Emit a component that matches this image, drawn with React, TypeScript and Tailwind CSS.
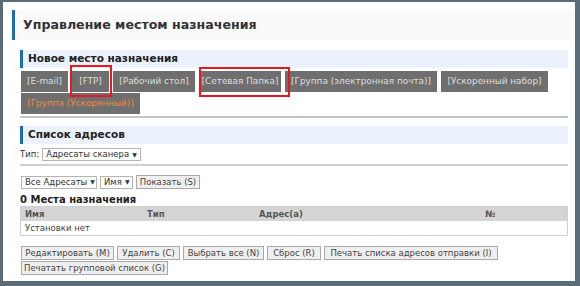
import React from 'react';

const tabs: { label: string; w: string }[] = [
  { label: '[E-mail]', w: 'w-[47px]' },
  { label: '[FTP]', w: 'w-[37px]' },
  { label: '[Рабочий стол]', w: 'w-[82px]' },
  { label: '[Сетевая Папка]', w: 'w-[82px]' },
  { label: '[Группа (электронная почта)]', w: 'w-[152px]' },
  { label: '[Ускоренный набор]', w: 'w-[107px]' },
];

const SectionBar: React.FC<{ title: string }> = ({ title }) => (
  <div className="h-[18px] flex items-center border-l-[3px] border-[#1f6db0] bg-[#ebf2fd] pl-[5px]">
    <span className="text-[10.5px] font-bold text-[#222]">{title}</span>
  </div>
);

const Btn: React.FC<{ children: React.ReactNode; w: string }> = ({ children, w }) => (
  <button
    className={`h-[14px] ${w} flex items-center justify-center border border-[#a9a9a9] bg-[#efefef] text-[8.5px] text-[#444] leading-none whitespace-nowrap`}
  >
    {children}
  </button>
);

const Select: React.FC<{ label: string; w: string }> = ({ label, w }) => (
  <div
    className={`h-[13px] ${w} flex items-center gap-[3px] border border-[#b5b5b5] bg-white px-[3px] text-[8.5px] text-[#333] leading-none whitespace-nowrap`}
  >
    <span>{label}</span>
    <span className="text-[6px]">▼</span>
  </div>
);

const App: React.FC = () => {
  return (
    <div
      className="w-[580px] h-[286px] bg-[#5b6b77] pt-[2px] pl-[3px] pr-[5px] pb-[5px] overflow-hidden"
      style={{ fontFamily: '"DejaVu Sans", Verdana, sans-serif' }}
    >
      <div className="relative h-full bg-white pt-[8px] pl-[9px] pr-[1px]">
        {/* page header */}
        <div className="h-[30px] flex items-center border-l-[3px] border-[#1f6db0] bg-[#fafafa] pl-[8px]">
          <h1 className="text-[12.6px] font-bold text-[#333]">Управление местом назначения</h1>
        </div>

        <div className="ml-[8px] mr-[6px] mt-[10px]">
          <SectionBar title="Новое место назначения" />

          <div className="mt-[3px] flex flex-wrap gap-x-[4px] gap-y-[1px] pl-[1px]">
            {tabs.map((t) => (
              <div
                key={t.label}
                className={`h-[21px] ${t.w} flex items-center justify-center bg-[#6f6f6f] text-[8.9px] text-[#dedede] whitespace-nowrap`}
              >
                {t.label}
              </div>
            ))}
            <div className="h-[21px] w-[119px] flex items-center justify-center bg-[#6f6f6f] text-[8.9px] text-[#f08a3c] whitespace-nowrap">
              [Группа (Ускоренный)]
            </div>
          </div>

          <div className="mt-[2px] h-[2px] bg-[#c4c4c4]" />

          <div className="mt-[8px]">
            <SectionBar title="Список адресов" />
          </div>

          <div className="mt-[4px] flex items-center gap-[3px] text-[8.5px] text-[#333]">
            <span>Тип:</span>
            <Select label="Адресаты сканера" w="w-[99px]" />
          </div>

          <div className="mt-[3px] h-[2px] bg-[#d0d0d0]" />

          <div className="mt-[9px] flex items-center gap-[3px] pl-[1px]">
            <Select label="Все Адресаты" w="w-[76px]" />
            <Select label="Имя" w="w-[33px]" />
            <Btn w="w-[64px]">Показать (S)</Btn>
          </div>

          <div className="mt-[5px] text-[10px] font-bold text-[#222] leading-[12px]">0 Места назначения</div>

          <div className="border border-[#cfcfcf] text-[8.5px]">
            <div className="h-[14px] flex items-center bg-[#d4d4d4] font-bold text-[#555]">
              <span className="w-[126px] pl-[4px]">Имя</span>
              <span className="w-[112px]">Тип</span>
              <span className="w-[226px]">Адрес(а)</span>
              <span>№</span>
            </div>
            <div className="h-[14px] flex items-center pl-[4px] text-[#444]">Установки нет</div>
          </div>

          <div className="mt-[10px] flex flex-wrap gap-x-[3px] gap-y-[1px] pl-[1px] w-[480px]">
            <Btn w="w-[93px]">Редактировать (M)</Btn>
            <Btn w="w-[63px]">Удалить (C)</Btn>
            <Btn w="w-[81px]">Выбрать все (N)</Btn>
            <Btn w="w-[54px]">Сброс (R)</Btn>
            <Btn w="w-[174px]">Печать списка адресов отправки (I)</Btn>
            <Btn w="w-[147px]">Печатать групповой список (G)</Btn>
          </div>
        </div>

        {/* red annotation frames */}
        <div className="absolute left-[67px] top-[63px] w-[42px] h-[32px] border-[2.5px] border-[#e8191c]" />
        <div className="absolute left-[196px] top-[65px] w-[91px] h-[30px] border-[2.5px] border-[#e8191c]" />
      </div>
    </div>
  );
};

export default App;
